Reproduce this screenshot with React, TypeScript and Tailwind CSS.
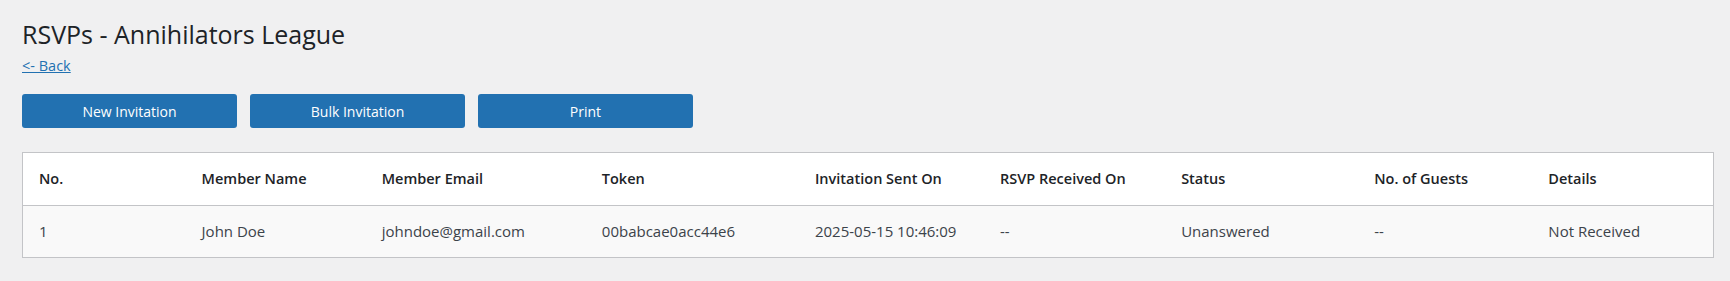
const columns = [
  { label: "No.", width: "w-[163px]" },
  { label: "Member Name", width: "w-[180px]" },
  { label: "Member Email", width: "w-[220px]" },
  { label: "Token", width: "w-[213px]" },
  { label: "Invitation Sent On", width: "w-[185px]" },
  { label: "RSVP Received On", width: "w-[181px]" },
  { label: "Status", width: "w-[193px]" },
  { label: "No. of Guests", width: "w-[174px]" },
  { label: "Details", width: "w-[181px]" },
];

const rows = [
  [
    "1",
    "John Doe",
    "johndoe@gmail.com",
    "00babcae0acc44e6",
    "2025-05-15 10:46:09",
    "--",
    "Unanswered",
    "--",
    "Not Received",
  ],
];

export default function App() {
  return (
    <div className="min-h-[281px] bg-[#f0f0f1] pl-[22px] pr-[16px] pt-[18px] font-['Open_Sans',sans-serif] text-[#3c434a]">
      <h1 className="text-[25px] leading-[32px] font-normal text-[#1d2327]">RSVPs - Annihilators League</h1>
      <a href="#" className="mt-[6px] block w-fit text-[14.5px] leading-[20px] text-[#2271b1] underline">
        &lt;- Back
      </a>

      <div className="mt-[18px] flex gap-[13px]">
        {["New Invitation", "Bulk Invitation", "Print"].map((label) => (
          <button
            key={label}
            className="h-[34px] w-[215px] rounded-[3px] bg-[#2271b1] text-[14px] text-white"
          >
            {label}
          </button>
        ))}
      </div>

      <table className="mt-[24px] w-full table-fixed border-collapse border border-[#c3c4c7] text-[15px]">
        <thead>
          <tr className="bg-white">
            {columns.map((col) => (
              <th
                key={col.label}
                className={`${col.width} h-[53px] border-b border-[#c3c4c7] pl-[16px] text-left text-[14.5px] font-semibold text-[#1d2327]`}
              >
                {col.label}
              </th>
            ))}
          </tr>
        </thead>
        <tbody>
          {rows.map((row, i) => (
            <tr key={i} className="bg-[#f9f9f9]">
              {row.map((cell, j) => (
                <td key={j} className="h-[52px] pl-[16px]">
                  {cell}
                </td>
              ))}
            </tr>
          ))}
        </tbody>
      </table>
    </div>
  );
}
